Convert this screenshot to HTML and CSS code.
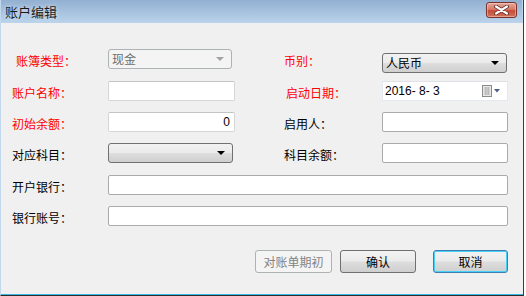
FILE: index.html
```html
<!DOCTYPE html>
<html lang="zh-CN">
<head>
    <meta charset="UTF-8">
    <meta name="viewport" content="width=device-width, initial-scale=1.0">
    <title>账户编辑</title>
    <link rel="stylesheet" href="styles.css">
</head>
<body>

    <div class="window">
        <div class="titlebar">
            <span class="title">账户编辑</span>
            <button class="close" type="button">
                <svg width="15" height="10" viewBox="0 0 15 10">
                    <path d="M2 1.5 L13 8.5 M13 1.5 L2 8.5" stroke="#5a2a24" stroke-width="3.8" stroke-linecap="round"/>
                    <path d="M2 1.5 L13 8.5 M13 1.5 L2 8.5" stroke="#ffffff" stroke-width="2.2" stroke-linecap="round"/>
                </svg>
            </button>
        </div>

        <div class="content">
            <div class="form">
                <label class="lbl req first">账簿类型：</label>
                <div class="combo disabled">
                    <span>现金</span>
                    <i class="arrow"></i>
                </div>
                <label class="lbl req right">币别：</label>
                <div class="combo low">
                    <span>人民币</span>
                    <i class="arrow"></i>
                </div>

                <label class="lbl req">账户名称：</label>
                <input class="field soft" type="text">
                <label class="lbl req right shift">启动日期：</label>
                <div class="date">
                    <span class="date-text">2016- 8- 3</span>
                    <svg class="cal" width="19" height="12" viewBox="0 0 19 12">
                        <rect x="0.5" y="0.5" width="9" height="11" fill="#e8e8e8" stroke="#8a8a8a"/>
                        <path d="M2 3h6M2 5h6M2 7h6M2 9h6M3.5 2v8M5 2v8M6.5 2v8" stroke="#b5b5b5" stroke-width="0.8"/>
                        <path d="M12 4h6l-3 3.5z" fill="#4d6185"/>
                    </svg>
                </div>

                <label class="lbl req">初始余额：</label>
                <input class="field soft num" type="text" value="0">
                <label class="lbl right">启用人：</label>
                <input class="field narrow" type="text">

                <label class="lbl">对应科目：</label>
                <div class="combo">
                    <span></span>
                    <i class="arrow"></i>
                </div>
                <label class="lbl right">科目余额：</label>
                <input class="field narrow" type="text">

                <label class="lbl">开户银行：</label>
                <input class="field wide" type="text">

                <label class="lbl">银行账号：</label>
                <input class="field wide" type="text">
            </div>

            <div class="actions">
                <button class="btn" type="button" disabled>对账单期初</button>
                <button class="btn" type="button">确认</button>
                <button class="btn default" type="button">取消</button>
            </div>
        </div>
    </div>

</body>
</html>
```

FILE: styles.css
```css
* {
    padding: 0;
    margin: 0;
    box-sizing: border-box;
}

html, body {
    width: 526px;
    height: 296px;
    background-color: #ffffff;
    overflow: hidden;
}

body {
    font-family: "Noto Sans CJK SC", "Liberation Sans", sans-serif;
    font-size: 12px;
    color: #000000;
}

.window {
    width: 524px;
    height: 296px;
    display: flex;
    flex-direction: column;
    border-left: 1px solid #c2d8ef;
    border-right: 1px solid #3c3c3c;
    border-bottom: 1px solid #2b2b2b;
    background-color: #f0f0f0;
}

.titlebar {
    height: 23px;
    flex: none;
    display: flex;
    align-items: center;
    justify-content: space-between;
    padding: 0 5px 0 4px;
    background: linear-gradient(#92b0d1, #bbd3ec);
    border-right: 1px solid #bcd4ec;
}

.title {
    font-size: 13px;
    color: #1a1a1a;
    text-shadow: 0 0 4px rgba(255, 255, 255, 0.7);
    line-height: 23px;
}

.close {
    width: 31px;
    height: 16px;
    margin-top: -3px;
    display: flex;
    align-items: center;
    justify-content: center;
    border: 1px solid #7a332b;
    border-radius: 3px;
    background: linear-gradient(#e4a89d 0%, #d77a68 45%, #c54b35 55%, #d0735e 100%);
    box-shadow: inset 0 0 0 1px rgba(255, 220, 210, 0.45);
}

.content {
    flex: 1;
    padding: 26px 0 0 11px;
    border-bottom: 1px solid #38b6e4;
}

.form {
    display: grid;
    grid-template-columns: 96px 127px 49px 98px 126px;
    grid-template-rows: 32px 31px 31px 32px 31px 20px;
    align-items: start;
}

.lbl {
    grid-column: 1;
    line-height: 20px;
    margin-top: 2px;
    white-space: nowrap;
}

.lbl.first {
    padding-left: 4px;
}

.lbl.right {
    grid-column: 4;
}

.lbl.shift {
    padding-left: 2px;
}

.req {
    color: #ff0000;
}

.field {
    height: 20px;
    width: 127px;
    border: 1px solid #ababab;
    border-radius: 2px;
    background-color: #ffffff;
    font-family: inherit;
    font-size: 12px;
    padding: 0 4px;
    outline: none;
}

.field.soft {
    border-color: #d4d6da;
    border-top-color: #c2c4c8;
}

.field.num {
    text-align: right;
    font-family: "Liberation Sans", sans-serif;
}

.field.narrow {
    width: 126px;
}

.field.wide {
    grid-column: 2 / 6;
    width: 400px;
}

.combo {
    width: 125px;
    height: 20px;
    display: flex;
    align-items: center;
    justify-content: space-between;
    padding: 0 7px 0 3px;
    border: 1px solid #707070;
    border-radius: 3px;
    background: linear-gradient(#f2f2f2 0%, #ebebeb 48%, #dddddd 52%, #cfcfcf 100%);
    line-height: 18px;
}

.combo.low {
    margin-top: 4px;
}

.combo .arrow {
    width: 0;
    height: 0;
    border-left: 4px solid transparent;
    border-right: 4px solid transparent;
    border-top: 4px solid #000000;
}

.combo.disabled {
    width: 124px;
    border-color: #adb2b5;
    background: #f4f4f4;
    color: #6d6d6d;
}

.combo.disabled .arrow {
    border-top-color: #a3a3a3;
}

.date {
    width: 126px;
    height: 20px;
    display: flex;
    align-items: center;
    justify-content: space-between;
    padding: 0 6px 0 2px;
    background-color: #ffffff;
    border: 1px solid #e3e9ef;
    border-top-color: #dfe3e8;
}

.date-text {
    font-family: "Liberation Sans", sans-serif;
    font-size: 12px;
    white-space: pre;
}

.actions {
    width: 496px;
    margin-top: 24px;
    display: flex;
    justify-content: flex-end;
    gap: 8px;
}

.btn {
    width: 76px;
    height: 23px;
    font-family: inherit;
    font-size: 12px;
    color: #000000;
    border: 1px solid #707070;
    border-radius: 3px;
    background: linear-gradient(#f2f2f2 0%, #ebebeb 48%, #dddddd 52%, #cfcfcf 100%);
}

.btn:disabled {
    width: 77px;
    color: #838383;
    border-color: #adb2b5;
    background: #f4f4f4;
}

.btn.default {
    width: 75px;
    margin-left: 9px;
    border-color: #3c7fb1;
    box-shadow: inset 0 0 0 1px #48d0f8;
}
```
